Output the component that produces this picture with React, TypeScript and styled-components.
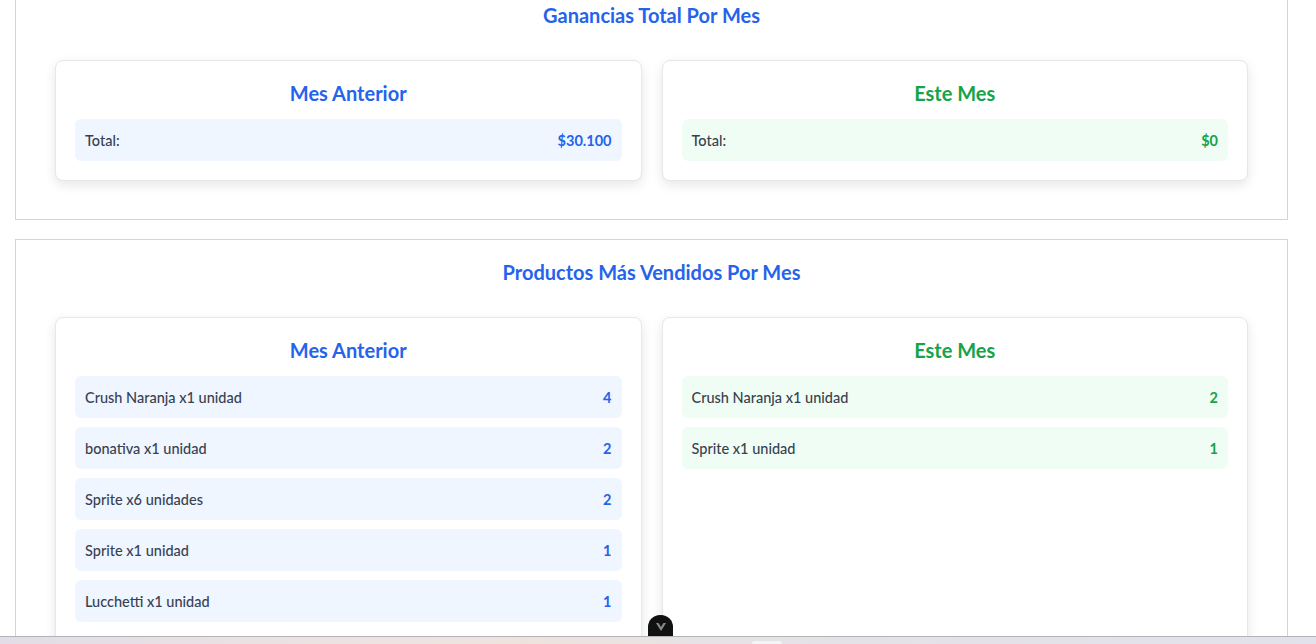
import React from "react";
import styled, { createGlobalStyle } from "styled-components";

const GlobalStyle = createGlobalStyle`
  html, body { margin: 0; padding: 0; background: #ffffff; overflow: hidden; }
  body { font-family: "Lato", "Noto Sans", sans-serif; color: #374151; }
  * { box-sizing: border-box; }
`;

const Page = styled.div`
  display: flex;
  flex-direction: column;
  gap: 19px;
  padding: 0 28px 0 15px;
  margin-top: -18px;
`;

const Section = styled.section`
  border: 1px solid #d4d4d8;
  background: #ffffff;
  padding: 20px 39px 38px;
`;

const SectionTitle = styled.h2`
  margin: 0 0 33px;
  height: 24px;
  line-height: 24px;
  text-align: center;
  font-size: 20px;
  font-weight: 700;
  color: #2563eb;
`;

const Grid = styled.div`
  display: grid;
  grid-template-columns: 1fr 1fr;
  gap: 20px;
`;

const Card = styled.div<{ $tall?: boolean }>`
  background: #ffffff;
  border: 1px solid #e5e7eb;
  border-radius: 8px;
  box-shadow: 0 4px 12px rgba(0, 0, 0, 0.1);
  padding: 20px 19px 19px;
  min-height: ${(p) => (p.$tall ? "340px" : "auto")};
`;

const CardTitle = styled.h3<{ $tone: "blue" | "green" }>`
  margin: 0 0 14px;
  height: 24px;
  line-height: 24px;
  text-align: center;
  font-size: 20px;
  font-weight: 700;
  color: ${(p) => (p.$tone === "blue" ? "#2563eb" : "#16a34a")};
`;

const List = styled.div`
  display: flex;
  flex-direction: column;
  gap: 9px;
`;

const Row = styled.div<{ $tone: "blue" | "green" }>`
  display: flex;
  align-items: center;
  justify-content: space-between;
  height: 42px;
  padding: 0 10px;
  border-radius: 6px;
  background: ${(p) => (p.$tone === "blue" ? "#eff6ff" : "#f0fdf4")};
`;

const Label = styled.span`
  font-size: 14.5px;
  font-weight: 500;
  color: #374151;
`;

const Value = styled.span<{ $tone: "blue" | "green" }>`
  font-size: 14.5px;
  font-weight: 700;
  color: ${(p) => (p.$tone === "blue" ? "#2563eb" : "#16a34a")};
`;

const DevToggle = styled.div`
  position: fixed;
  left: 648px;
  bottom: 8px;
  width: 25px;
  height: 21px;
  border-radius: 12px 12px 0 0;
  background: #111111;
  display: flex;
  align-items: center;
  justify-content: center;
  padding-top: 3px;
`;

const Taskbar = styled.div`
  position: fixed;
  left: 0;
  right: 0;
  bottom: 0;
  height: 8px;
  border-top: 1px solid #b4b4b8;
  background: linear-gradient(90deg, #e2dde6 0%, #ece2e2 25%, #eee3dc 40%, #e6e2e6 55%, #e4e2e8 75%, #e2e2ec 100%);
`;

const TaskTab = styled.div`
  position: absolute;
  left: 752px;
  top: 4px;
  width: 30px;
  height: 4px;
  border-radius: 3px 3px 0 0;
  background: #f4f4f6;
`;

type Tone = "blue" | "green";
type Item = { name: string; qty: string };

const prev: Item[] = [
  { name: "Crush Naranja x1 unidad", qty: "4" },
  { name: "bonativa x1 unidad", qty: "2" },
  { name: "Sprite x6 unidades", qty: "2" },
  { name: "Sprite x1 unidad", qty: "1" },
  { name: "Lucchetti x1 unidad", qty: "1" },
];

const curr: Item[] = [
  { name: "Crush Naranja x1 unidad", qty: "2" },
  { name: "Sprite x1 unidad", qty: "1" },
];

function ProductCard({ title, tone, items }: { title: string; tone: Tone; items: Item[] }) {
  return (
    <Card $tall>
      <CardTitle $tone={tone}>{title}</CardTitle>
      <List>
        {items.map((it) => (
          <Row key={it.name} $tone={tone}>
            <Label>{it.name}</Label>
            <Value $tone={tone}>{it.qty}</Value>
          </Row>
        ))}
      </List>
    </Card>
  );
}

export default function App() {
  return (
    <>
      <GlobalStyle />
      <Page>
        <Section>
          <SectionTitle>Ganancias Total Por Mes</SectionTitle>
          <Grid>
            <Card>
              <CardTitle $tone="blue">Mes Anterior</CardTitle>
              <Row $tone="blue">
                <Label>Total:</Label>
                <Value $tone="blue">$30.100</Value>
              </Row>
            </Card>
            <Card>
              <CardTitle $tone="green">Este Mes</CardTitle>
              <Row $tone="green">
                <Label>Total:</Label>
                <Value $tone="green">$0</Value>
              </Row>
            </Card>
          </Grid>
        </Section>
        <Section>
          <SectionTitle>Productos Más Vendidos Por Mes</SectionTitle>
          <Grid>
            <ProductCard title="Mes Anterior" tone="blue" items={prev} />
            <ProductCard title="Este Mes" tone="green" items={curr} />
          </Grid>
        </Section>
      </Page>
      <DevToggle>
        <svg width="12" height="10" viewBox="0 0 12 10">
          <path d="M1 1 L6 9 L11 1 L8.5 1 L6 5 L3.5 1 Z" fill="#8a8a8a" />
        </svg>
      </DevToggle>
      <Taskbar>
        <TaskTab />
      </Taskbar>
    </>
  );
}
